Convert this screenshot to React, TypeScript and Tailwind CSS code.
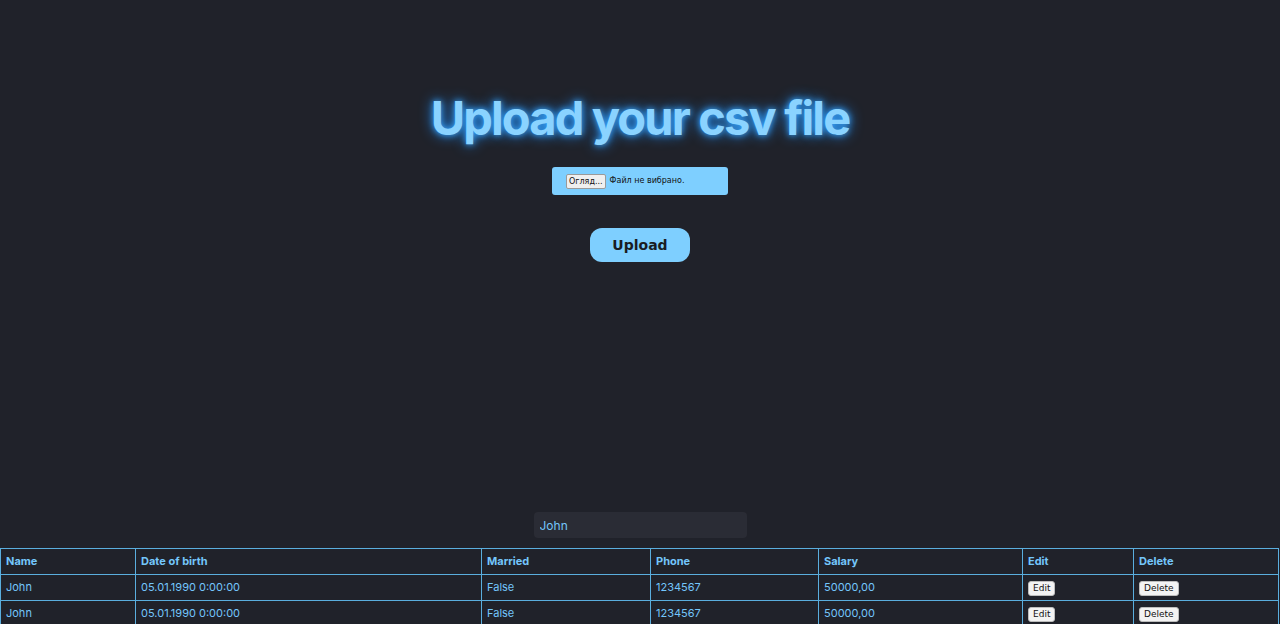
import React, { useState } from 'react';

interface Person {
  name: string;
  dateOfBirth: string;
  married: string;
  phone: string;
  salary: string;
}

const people: Person[] = [
  { name: 'John', dateOfBirth: '05.01.1990 0:00:00', married: 'False', phone: '1234567', salary: '50000,00' },
  { name: 'John', dateOfBirth: '05.01.1990 0:00:00', married: 'False', phone: '1234567', salary: '50000,00' },
];

const cell = 'border border-[#5aaede] px-[5px] h-[26px] text-left align-middle';
const smallBtn =
  'px-[4px] h-[15px] leading-[13px] text-[9px] text-[#111] bg-[#f3f3f3] border border-[#bdbdbd] rounded-[3px] font-["DejaVu_Sans",sans-serif]';

export default function App() {
  const [search, setSearch] = useState('John');

  return (
    <div className="min-h-[624px] bg-[#20222a] font-['Inter',sans-serif] text-[#74c6fb] overflow-hidden">
      {/* Upload form */}
      <div className="flex flex-col items-center pt-[90px]">
        <h1 className="text-[47px] leading-[56px] font-bold tracking-[-1.85px] text-[#8ad3ff] [text-shadow:0_0_6px_#3aa8ff,0_0_14px_#1f8fff]">
          Upload your csv file
        </h1>
        <label className="mt-[21px] w-[176px] h-[28px] flex items-center pl-[14px] gap-[4px] bg-[#7ecfff] rounded-[3px] cursor-pointer font-['DejaVu_Sans',sans-serif]">
          <span className="px-[2px] h-[15px] leading-[13px] text-[8px] text-[#111] bg-[#efefef] border border-[#9a9a9a] rounded-[2px]">
            Огляд...
          </span>
          <span className="text-[8px] text-[#111]">Файл не вибрано.</span>
        </label>
        <button className="mt-[33px] w-[100px] h-[34px] rounded-[12px] bg-[#7ecfff] text-[#1a1c22] text-[14px] font-bold font-['DejaVu_Sans',sans-serif]">
          Upload
        </button>
      </div>

      {/* Search */}
      <div className="flex justify-center mt-[250px]">
        <input
          value={search}
          onChange={(e: React.ChangeEvent<HTMLInputElement>) => setSearch(e.target.value)}
          className="w-[213px] h-[26px] px-[6px] bg-[#2a2c35] rounded-[4px] text-[12px] text-[#74c6fb] outline-none"
        />
      </div>

      {/* Table */}
      <table className="mt-[10px] w-[1278px] border-collapse text-[11px] table-fixed">
        <colgroup>
          <col className="w-[135px]" />
          <col className="w-[346px]" />
          <col className="w-[169px]" />
          <col className="w-[168px]" />
          <col className="w-[204px]" />
          <col className="w-[111px]" />
          <col className="w-[145px]" />
        </colgroup>
        <thead>
          <tr className="font-bold">
            <th className={`${cell} h-[25px]`}>Name</th>
            <th className={`${cell} h-[25px]`}>Date of birth</th>
            <th className={`${cell} h-[25px]`}>Married</th>
            <th className={`${cell} h-[25px]`}>Phone</th>
            <th className={`${cell} h-[25px]`}>Salary</th>
            <th className={`${cell} h-[25px]`}>Edit</th>
            <th className={`${cell} h-[25px]`}>Delete</th>
          </tr>
        </thead>
        <tbody>
          {people.filter((p) => p.name.includes(search)).map((p, i) => (
            <tr key={i}>
              <td className={cell}>{p.name}</td>
              <td className={cell}>{p.dateOfBirth}</td>
              <td className={cell}>{p.married}</td>
              <td className={cell}>{p.phone}</td>
              <td className={cell}>{p.salary}</td>
              <td className={cell}>
                <button className={smallBtn}>Edit</button>
              </td>
              <td className={cell}>
                <button className={smallBtn}>Delete</button>
              </td>
            </tr>
          ))}
        </tbody>
      </table>
    </div>
  );
}
